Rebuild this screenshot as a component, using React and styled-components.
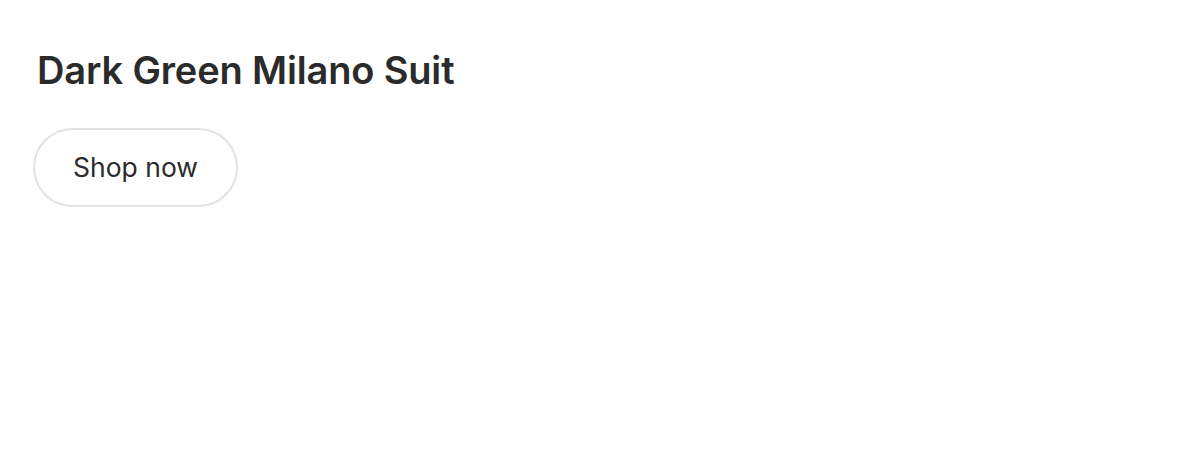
import styled, { createGlobalStyle } from "styled-components";

const Global = createGlobalStyle`
  body {
    margin: 0;
    background: #fff;
    font-family: Inter, "Liberation Sans", sans-serif;
    color: #2b2b2b;
  }
`;

const Card = styled.section`
  display: flex;
  flex-direction: column;
  align-items: flex-start;
  gap: 34px;
  padding: 46px 33px;
`;

const Title = styled.h2`
  margin: 0 0 0 4px;
  font-size: 38px;
  font-weight: 600;
  letter-spacing: -0.15px;
  line-height: 48px;
  color: #2b2b2b;
`;

const ShopButton = styled.button`
  height: 79px;
  padding: 0 38px 2px;
  border: 2px solid #e2e2e2;
  border-radius: 40px;
  background: #fff;
  font-family: inherit;
  font-size: 26.5px;
  font-weight: 400;
  color: #2b2b2b;
  cursor: pointer;
`;

export default function App() {
  return (
    <>
      <Global />
      <Card>
        <Title>Dark Green Milano Suit</Title>
        <ShopButton>Shop now</ShopButton>
      </Card>
    </>
  );
}
